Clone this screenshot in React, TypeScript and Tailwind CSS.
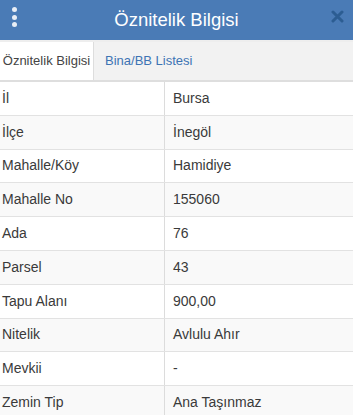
import React from "react";

const rows: [string, string][] = [
  ["İl", "Bursa"],
  ["İlçe", "İnegöl"],
  ["Mahalle/Köy", "Hamidiye"],
  ["Mahalle No", "155060"],
  ["Ada", "76"],
  ["Parsel", "43"],
  ["Tapu Alanı", "900,00"],
  ["Nitelik", "Avlulu Ahır"],
  ["Mevkii", "-"],
  ["Zemin Tip", "Ana Taşınmaz"],
];

export default function App() {
  return (
    <div
      className="w-[353px] h-[415px] overflow-hidden bg-white text-[#3a3a3a]"
      style={{ fontFamily: '"Liberation Sans", Arial, sans-serif' }}
    >
      <div className="h-[40px] bg-[#4a7bb6] flex items-center relative">
        <div className="absolute left-[12px] top-[7px] flex flex-col gap-[2.5px]">
          <span className="block w-[5px] h-[5px] rounded-full bg-[#e8eef6]" />
          <span className="block w-[5px] h-[5px] rounded-full bg-[#e8eef6]" />
          <span className="block w-[5px] h-[5px] rounded-full bg-[#e8eef6]" />
        </div>
        <div className="flex-1 text-center text-white text-[18.5px] leading-none">Öznitelik Bilgisi</div>
        <svg className="absolute right-[9px] top-[10px]" width="13" height="13" viewBox="0 0 13 13">
          <path d="M2 2 L11 11 M11 2 L2 11" stroke="#2c5d92" strokeWidth="3" strokeLinecap="round" />
        </svg>
      </div>
      <div className="h-[2px] bg-[#eeeeee]" />
      <div className="h-[40px] flex bg-[#f2f2f2] border-b-[2px] border-[#dedede]">
        <div className="w-[94px] bg-white border-r border-[#dddddd] flex items-center justify-center text-[13px] text-[#444]">
          Öznitelik Bilgisi
        </div>
        <div className="px-[11px] flex items-center text-[13px] text-[#3e74b4]">Bina/BB Listesi</div>
      </div>
      <div className="flex flex-col">
        {rows.map(([k, v], i) => (
          <div
            key={k}
            className={`flex h-[33.8px] border-b-[1.5px] border-[#e2e2e2] text-[14px] ${i % 2 === 1 ? "bg-[#f9f9f9]" : "bg-white"}`}
          >
            <div className="w-[165px] border-r border-[#dcdcdc] flex items-center pl-[2px]">{k}</div>
            <div className="flex-1 flex items-center pl-[8px]">{v}</div>
          </div>
        ))}
      </div>
    </div>
  );
}
